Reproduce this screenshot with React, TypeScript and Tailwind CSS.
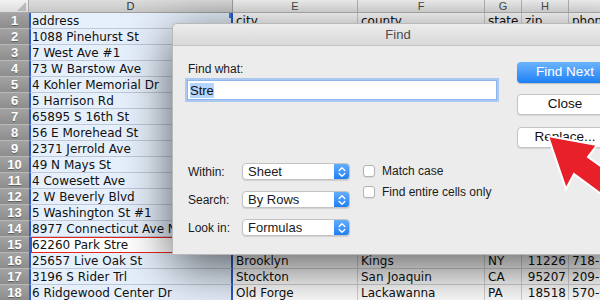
import React from "react";

type Row = [string, string, string, string, string, string];

const rows: Row[] = [
  ["address", "city", "county", "state", "zip", "phone"],
  ["1088 Pinehurst St", "", "", "", "", ""],
  ["7 West Ave #1", "", "", "", "", ""],
  ["73 W Barstow Ave", "", "", "", "", ""],
  ["4 Kohler Memorial Dr", "", "", "", "", ""],
  ["5 Harrison Rd", "", "", "", "", ""],
  ["65895 S 16th St", "", "", "", "", ""],
  ["56 E Morehead St", "", "", "", "", ""],
  ["2371 Jerrold Ave", "", "", "", "", ""],
  ["49 N Mays St", "", "", "", "", ""],
  ["4 Cowesett Ave", "", "", "", "", ""],
  ["2 W Beverly Blvd", "", "", "", "", ""],
  ["5 Washington St #1", "", "", "", "", ""],
  ["8977 Connecticut Ave Nw #3", "", "", "", "", ""],
  ["62260 Park Stre", "", "", "", "", ""],
  ["25657 Live Oak St", "Brooklyn", "Kings", "NY", "11226", "718-201-8986"],
  ["3196 S Rider Trl", "Stockton", "San Joaquin", "CA", "95207", "209-242-7022"],
  ["6 Ridgewood Center Dr", "Old Forge", "Lackawanna", "PA", "18518", "570-648-3035"],
];

function Chevrons() {
  return (
    <svg width="8" height="12" viewBox="0 0 8 12" fill="none" stroke="white" strokeWidth="1.4" strokeLinecap="round" strokeLinejoin="round">
      <path d="M1.2 4.6 L4 1.8 L6.8 4.6" />
      <path d="M1.2 7.4 L4 10.2 L6.8 7.4" />
    </svg>
  );
}

function Select({ value }: { value: string }) {
  return (
    <div className="flex h-[17px] w-[108px] items-stretch rounded-[4px] border border-[#c3c3c3] bg-white shadow-[0_1px_1px_rgba(0,0,0,0.12)]">
      <div className="flex flex-1 items-center pl-[5px] text-[13px] leading-none text-[#1a1a1a]">{value}</div>
      <div className="flex w-[15px] items-center justify-center rounded-r-[3px] bg-gradient-to-b from-[#62adfb] to-[#1c7ff6]">
        <Chevrons />
      </div>
    </div>
  );
}

function Checkbox({ label }: { label: string }) {
  return (
    <div className="flex h-[16px] items-center gap-[7px]">
      <div className="h-[12px] w-[12px] rounded-[3px] border border-[#b2b2b2] bg-white shadow-[0_1px_1px_rgba(0,0,0,0.08)]" />
      <span className="text-[12px] leading-none text-[#1a1a1a]">{label}</span>
    </div>
  );
}

const colHead =
  "flex shrink-0 items-center justify-center border-b border-r border-[#b4b4b4] bg-gradient-to-b from-[#f3f3f3] to-[#e0e0e0] text-[11px] text-[#4a4a4a]";
const cell =
  "flex shrink-0 items-center overflow-hidden whitespace-nowrap border-b border-r border-[#d2d2d2]";

export default function App() {
  return (
    <div className="relative h-[300px] w-[600px] overflow-hidden bg-white font-['Liberation_Sans',Arial,sans-serif]">
      {/* Column headers */}
      <div className="flex h-[13px]">
        <div className="relative w-[29px] shrink-0 border-b border-r border-[#a8a8a8] bg-gradient-to-b from-[#f2f2f2] to-[#dcdcdc]">
          <svg className="absolute bottom-[1px] right-[2px]" width="9" height="9" viewBox="0 0 9 9">
            <polygon points="9,0 9,9 0,9" fill="#b8b8b8" />
          </svg>
        </div>
        <div className="flex w-[204px] shrink-0 items-center justify-center border-b border-r border-[#a0a0a0] bg-gradient-to-b from-[#dcdcdc] to-[#c8c8c8] text-[11px] text-[#333]">D</div>
        <div className={`${colHead} w-[125px]`}>E</div>
        <div className={`${colHead} w-[127px]`}>F</div>
        <div className={`${colHead} w-[37px]`}>G</div>
        <div className={`${colHead} w-[47px]`}>H</div>
        <div className={`${colHead} w-[80px]`}>I</div>
      </div>

      {/* Rows */}
      {rows.map((r, i) => {
        const editing = i === 14;
        return (
          <div key={i} className="flex h-[16px] font-['DejaVu_Sans',sans-serif] text-[12px] leading-none text-[#111]">
            <div className="flex w-[29px] shrink-0 items-center justify-center border-b border-[#b9b9b9] bg-gradient-to-b from-[#a3a3a3] to-[#8c8c8c] font-['Liberation_Sans',Arial,sans-serif] text-[13px] font-bold text-white [text-shadow:0_1px_0_rgba(0,0,0,0.35)]">
              {i + 1}
            </div>
            <div className={`relative flex w-[204px] shrink-0 items-center overflow-hidden whitespace-nowrap border-l-2 border-r-2 border-l-[#2a5bd0] border-r-[#2a5bd0] ${editing ? "bg-white" : "border-b border-b-[#bfc9d6] bg-[#e6f0fc]"}`}>
              {editing && <div className="pointer-events-none absolute inset-0 border border-[#e8241c]" />}
              <span className="pl-[1px]">{r[0]}</span>
              {i === 0 && <div className="absolute right-[-2px] top-0 h-[5px] w-[4px] bg-[#3a7be0]" />}
            </div>
            <div className={`${cell} w-[125px] pl-[3px]`}>{r[1]}</div>
            <div className={`${cell} w-[127px] pl-[3px]`}>{r[2]}</div>
            <div className={`${cell} w-[37px] pl-[3px]`}>{r[3]}</div>
            <div className={`${cell} w-[47px] ${i === 0 ? "pl-[3px]" : "justify-end pr-[2px]"}`}>{r[4]}</div>
            <div className={`${cell} w-[80px] pl-[3px]`}>{r[5]}</div>
          </div>
        );
      })}

      {/* Find dialog */}
      <div className="absolute left-[172px] top-[23px] h-[232px] w-[452px] rounded-t-[5px] border border-[#b9b9b9] bg-[#ececec] shadow-[0_12px_50px_rgba(0,0,0,0.65)]">
        <div className="flex h-[22px] items-center justify-center rounded-t-[5px] border-b border-[#c4c4c4] bg-gradient-to-b from-[#ececec] to-[#d8d8d8] text-[13px] text-[#4c4c4c]">
          Find
        </div>
        <div className="flex">
          <div className="w-[344px] shrink-0 pl-[14px] pt-[16px]">
            <div className="h-[14px] pl-[1px] text-[12px] leading-[14px] text-[#1a1a1a]">Find what:</div>
            <div className="mt-[4px] flex h-[20px] w-[310px] items-center border border-[#8fb6ea] bg-white pl-[2px] shadow-[0_0_0_2px_#a9c9f3]">
              <span className="bg-[#b4d5fd] text-[13px] leading-[15px] text-[#111]">Stre</span>
            </div>
            <div className="mt-[63px] flex">
              <div className="flex flex-col gap-[11px]">
                {[
                  ["Within:", "Sheet"],
                  ["Search:", "By Rows"],
                  ["Look in:", "Formulas"],
                ].map(([l, v]) => (
                  <div key={l} className="flex h-[17px] items-center">
                    <span className="w-[55px] pl-[1px] text-[12px] text-[#1a1a1a]">{l}</span>
                    <Select value={v} />
                  </div>
                ))}
              </div>
              <div className="ml-[13px] flex flex-col gap-[5px]">
                <Checkbox label="Match case" />
                <Checkbox label="Find entire cells only" />
              </div>
            </div>
          </div>
          <div className="flex flex-col gap-[11px] pt-[16px]">
            <div className="flex h-[21px] w-[96px] items-center justify-center rounded-[4px] bg-gradient-to-b from-[#6ab4fb] to-[#1a7ff7] text-[13.5px] text-white shadow-[0_1px_1px_rgba(0,0,0,0.2)]">
              Find Next
            </div>
            <div className="flex h-[21px] w-[96px] items-center justify-center rounded-[4px] border border-[#c4c4c4] bg-white text-[13.5px] text-[#111] shadow-[0_1px_1px_rgba(0,0,0,0.1)]">
              Close
            </div>
            <div className="mt-[1px] flex h-[21px] w-[96px] items-center justify-center rounded-[4px] border border-[#c4c4c4] bg-white text-[13.5px] text-[#111] shadow-[0_1px_1px_rgba(0,0,0,0.1)]">
              Replace...
            </div>
          </div>
        </div>
      </div>

      {/* Red annotation arrow */}
      <svg className="absolute left-0 top-0" width="600" height="300" viewBox="0 0 600 300">
        <polygon
          points="548,136 597,145 588,157 645,198 631,216 574,174 566,189"
          fill="#e8202a"
          stroke="white"
          strokeWidth="2"
          strokeLinejoin="miter"
        />
      </svg>
    </div>
  );
}
